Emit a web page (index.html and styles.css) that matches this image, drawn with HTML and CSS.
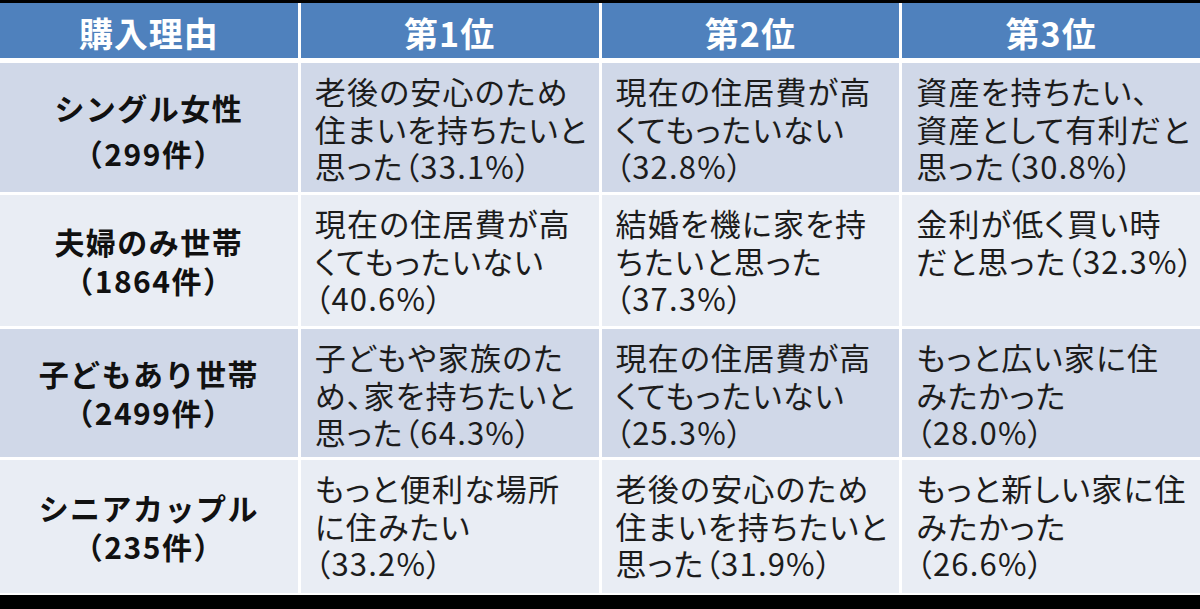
FILE: index.html
```html
<!DOCTYPE html>
<html lang="ja">
<head>
<meta charset="utf-8">
<title>購入理由</title>
<link rel="stylesheet" href="styles.css">
</head>
<body>
<div class="table">
  <div class="cell head">購入理由</div>
  <div class="cell head">第1位</div>
  <div class="cell head">第2位</div>
  <div class="cell head">第3位</div>

  <div class="cell label odd wide">シングル女性<br>（299件）</div>
  <div class="cell text odd">老後の安心のため<br>住まいを持ちたいと<br>思った（33.1%）</div>
  <div class="cell text odd">現在の住居費が高<br>くてもったいない<br>（32.8%）</div>
  <div class="cell text odd">資産を持ちたい、<br>資産として有利だと<br>思った（30.8%）</div>

  <div class="cell label even">夫婦のみ世帯<br>（1864件）</div>
  <div class="cell text even">現在の住居費が高<br>くてもったいない<br>（40.6%）</div>
  <div class="cell text even">結婚を機に家を持<br>ちたいと思った<br>（37.3%）</div>
  <div class="cell text even">金利が低く買い時<br>だと思った（32.3%）</div>

  <div class="cell label odd">子どもあり世帯<br>（2499件）</div>
  <div class="cell text odd">子どもや家族のた<br>め、家を持ちたいと<br>思った（64.3%）</div>
  <div class="cell text odd">現在の住居費が高<br>くてもったいない<br>（25.3%）</div>
  <div class="cell text odd">もっと広い家に住<br>みたかった<br>（28.0%）</div>

  <div class="cell label even">シニアカップル<br>（235件）</div>
  <div class="cell text even">もっと便利な場所<br>に住みたい<br>（33.2%）</div>
  <div class="cell text even">老後の安心のため<br>住まいを持ちたいと<br>思った（31.9%）</div>
  <div class="cell text even">もっと新しい家に住<br>みたかった<br>（26.6%）</div>
</div>
</body>
</html>
```

FILE: styles.css
```css
html, body {
  margin: 0;
  padding: 0;
  background: #000;
}
body {
  height: 609px;
  overflow: hidden;
  font-family: "Noto Sans CJK JP", "Noto Sans", sans-serif;
}
.table {
  margin-top: 3px;
  display: grid;
  grid-template-columns: repeat(4, 1fr);
  grid-template-rows: 57px 129px 131px 128px 133px;
  gap: 3px;
  background: #fff;
  padding-bottom: 2px;
}
.cell {
  white-space: nowrap;
  overflow: hidden;
}
.head {
  background: #4f81bd;
  border-bottom: 2px solid #fff;
  color: #fff;
  font-weight: 700;
  font-size: 34px;
  letter-spacing: 1px;
  display: flex;
  align-items: center;
  justify-content: center;
  padding-top: 4px;
}
.odd { background: #d0d8e8; }
.even { background: #e9edf4; }
.label {
  display: flex;
  align-items: center;
  justify-content: center;
  text-align: center;
  font-weight: 700;
  font-size: 30px;
  letter-spacing: 1.5px;
  line-height: 39px;
  color: #111;
}
.label.wide {
  line-height: 46px;
  padding-top: 4px;
}
.text {
  font-size: 31px;
  line-height: 37.5px;
  letter-spacing: 1.2px;
  font-feature-settings: "palt";
  color: #1c1c1c;
  padding: 9px 0 0 14px;
}
```
